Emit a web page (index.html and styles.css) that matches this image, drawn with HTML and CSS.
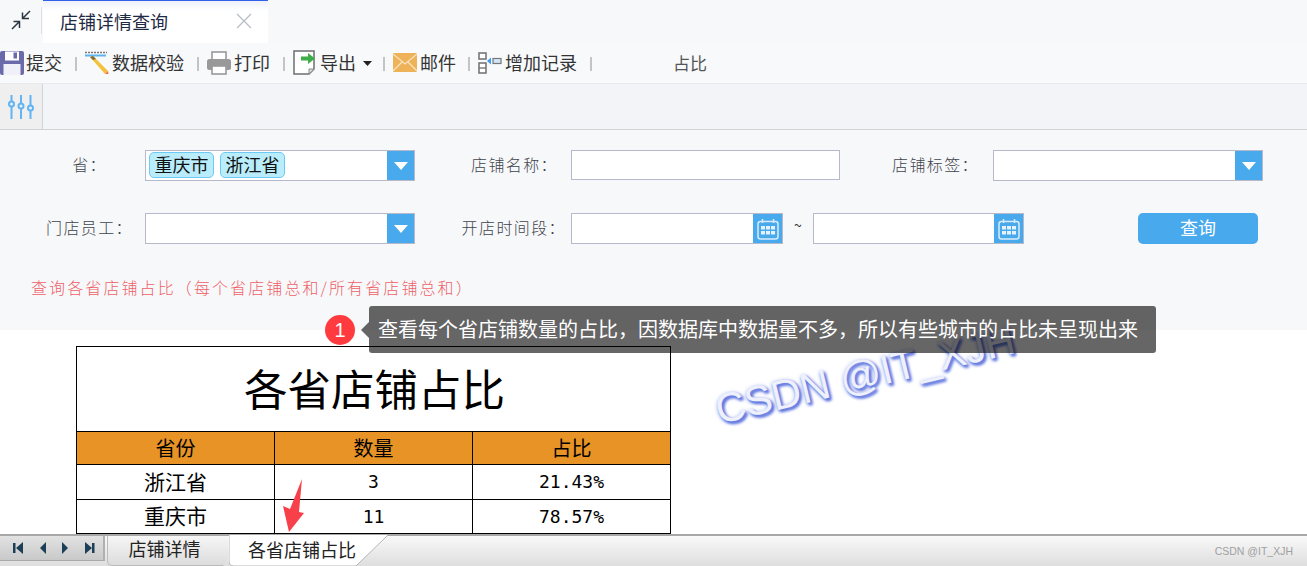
FILE: index.html
```html
<!DOCTYPE html>
<html lang="zh-CN">
<head>
<meta charset="utf-8">
<title>店铺详情查询</title>
<link rel="stylesheet" href="styles.css">
</head>
<body>
<div class="page">
  <header class="tabbar">
    <button class="collapse" aria-label="收起">
      <svg width="22" height="22" viewBox="0 0 22 22" fill="none" stroke="#2b3441" stroke-width="1.5"><path d="M20 2l-7.500 7.500M12.500 3.500v6h6.500"/><path d="M2 20l7.500-7.500M3.500 12.500h6v6.500"/></svg>
    </button>
    <div class="tab">
      <span>店铺详情查询</span>
      <svg class="tab-close" width="16" height="16" viewBox="0 0 16 16" stroke="#b6bcc6" stroke-width="1.2"><path d="M1 1l14 14M15 1L1 15"/></svg>
    </div>
  </header>

  <nav class="toolbar">
    <div class="tool tool-save">
      <svg width="24" height="24" viewBox="0 0 24 24"><rect y="0" width="24" height="24" rx="2" fill="#6b6bab"/><rect x="5" y="0.500" width="14" height="9" fill="#fff"/><rect x="13.500" y="1.500" width="3.500" height="6" fill="#6b6bab"/><rect x="3.500" y="13" width="17" height="11" fill="#f0f0f8"/></svg>
      <span>提交</span>
    </div>
    <i class="sep"></i>
    <div class="tool">
      <svg width="24" height="24" viewBox="0 0 24 24"><path d="M0 1.500h22" stroke="#777" stroke-width="1.500" stroke-dasharray="2 1"/><path d="M0 4.500h21" stroke="#5db4ee" stroke-width="2"/><path d="M5 6l3-1 15 15-3 3z" fill="#f3c23c"/><path d="M5 6l3-1 3 3-3 1z" fill="#7a6a3a"/><path d="M20 23l3-3 0.500 3z" fill="#ef6a50"/></svg>
      <span>数据校验</span>
    </div>
    <i class="sep"></i>
    <div class="tool">
      <svg width="24" height="24" viewBox="0 0 24 24"><rect x="5" y="1" width="14" height="9" fill="#fff" stroke="#999" stroke-width="1.600"/><rect y="8" width="24" height="11" rx="2.500" fill="#999"/><rect x="5" y="15" width="14" height="8" fill="#fff" stroke="#999" stroke-width="1.600"/></svg>
      <span>打印</span>
    </div>
    <i class="sep"></i>
    <div class="tool tool-export">
      <svg width="24" height="25" viewBox="0 0 24 25"><path d="M1 1h20v18l-5 5H1z" fill="#fff" stroke="#6d6d6d" stroke-width="1.500"/><path d="M21 19h-5v5z" fill="#ddd" stroke="#888"/><path d="M8 6.500h7V3l7 5.500-7 5.500v-3.500H8z" fill="#3fae49"/></svg>
      <span>导出</span>
      <svg class="caret" width="9" height="5" viewBox="0 0 9 5"><path d="M0 0h9L4.500 5z" fill="#222"/></svg>
    </div>
    <i class="sep"></i>
    <div class="tool tool-mail">
      <svg width="24" height="19" viewBox="0 0 24 19"><rect width="24" height="19" rx="1" fill="#eeb258"/><path d="M0 1l12 10L24 1M0 18l9-9M24 18l-9-9" fill="none" stroke="#fbe3bd" stroke-width="1.300"/></svg>
      <span>邮件</span>
    </div>
    <i class="sep"></i>
    <div class="tool">
      <svg width="24" height="22" viewBox="0 0 24 22"><rect x="1" y="1" width="7" height="6" fill="#fff" stroke="#777" stroke-width="1.600"/><rect x="1" y="11" width="7" height="10" fill="#fff" stroke="#777" stroke-width="1.600"/><path d="M1 16h7" stroke="#777" stroke-width="1.400"/><path d="M9 9l4-3.500v7z" fill="#3f9cf2"/><rect x="15" y="6.500" width="8" height="5" fill="#cfe6fb" stroke="#777" stroke-width="1.200"/></svg>
      <span>增加记录</span>
    </div>
    <i class="sep"></i>
    <div class="tool-plain">占比</div>
  </nav>

  <div class="filterstrip">
    <div class="filter-icon">
      <svg width="26" height="26" viewBox="0 0 26 26" stroke="#62b4f2" stroke-width="2" fill="none"><path d="M3.500 1v6M3.500 13v12M13 1v8M13 15v10M22.500 1v10M22.500 17v8"/><circle cx="3.500" cy="10" r="2.500"/><circle cx="13" cy="12" r="2.500"/><circle cx="22.500" cy="14" r="2.500"/></svg>
    </div>
  </div>

  <section class="form">
    <div class="form-grid">
      <label class="lbl lbl-a">省：</label>
      <div class="field">
        <div class="chips"><span class="chip">重庆市</span><span class="chip">浙江省</span></div>
        <span class="drop"><i></i></span>
      </div>
      <label class="lbl lbl-b">店铺名称：</label>
      <div class="field field-text"></div>
      <label class="lbl lbl-c">店铺标签：</label>
      <div class="field">
        <div class="chips"></div>
        <span class="drop"><i></i></span>
      </div>

      <label class="lbl lbl-d">门店员工：</label>
      <div class="field">
        <div class="chips"></div>
        <span class="drop"><i></i></span>
      </div>
      <label class="lbl lbl-e">开店时间段：</label>
      <div class="dates">
        <div class="field field-date">
          <div class="chips"></div>
          <span class="cal"><svg width="22" height="22" viewBox="0 0 22 22"><use href="#calendar"/></svg></span>
        </div>
        <span class="tilde">~</span>
        <div class="field field-date">
          <div class="chips"></div>
          <span class="cal"><svg width="22" height="22" viewBox="0 0 22 22"><use href="#calendar"/></svg></span>
        </div>
        <button class="query">查询</button>
      </div>
    </div>
    <p class="note">查询各省店铺占比（每个省店铺总和/所有省店铺总和）</p>
  </section>

  <main class="report">
    <table class="sheet">
      <colgroup><col class="c"><col class="c"><col class="c"></colgroup>
      <tr class="r-title"><td colspan="3">各省店铺占比</td></tr>
      <tr class="r-head"><th>省份</th><th>数量</th><th>占比</th></tr>
      <tr class="r-a"><td class="name">浙江省</td><td class="num">3</td><td class="num">21.43%</td></tr>
      <tr class="r-b"><td class="name">重庆市</td><td class="num">11</td><td class="num">78.57%</td></tr>
    </table>
    <div class="watermark">CSDN @IT_XJH</div>
    <svg class="red-arrow" width="22" height="54" viewBox="0 0 22 54"><path d="M19 0L16 33l5 1L6 53 0 27l7 3z" fill="#f8404a"/></svg>
  </main>

  <div class="tip">
    <span class="badge">1</span>
    <div class="tip-box">查看每个省店铺数量的占比，因数据库中数据量不多，所以有些城市的占比未呈现出来</div>
  </div>

  <footer class="sheetbar">
    <div class="pager">
      <svg width="82" height="12" viewBox="0 0 82 12" fill="#1c3f58"><path d="M0 1h2.500v10H0zM10 0v12L3 6z"/><path d="M33 0v12l-6-6z"/><path d="M49 0v12l6-6z"/><path d="M72 0v12l7-6zM79 1h2.500v10H79z"/></svg>
    </div>
    <div class="stab stab-off">店铺详情</div>
    <div class="stab stab-on">
      <svg class="stab-shape" width="160" height="32" viewBox="0 0 160 32"><path d="M0 0v26q0 5 5 5h122L159 0" fill="#fff" stroke="#b5b5b5"/></svg>
      <span>各省店铺占比</span>
    </div>
    <div class="credit">CSDN @IT_XJH</div>
  </footer>
</div>

<svg class="defs" width="0" height="0" aria-hidden="true">
  <symbol id="calendar" viewBox="0 0 22 22">
    <rect x="1" y="3.500" width="20" height="17.500" rx="2.500" fill="none" stroke="#d7ecfb" stroke-width="1.500"/>
    <path d="M5.500 1v4M16.500 1v4" stroke="#d7ecfb" stroke-width="1.500"/>
    <g fill="#e4f2fc"><rect x="4" y="8" width="4" height="3.500"/><rect x="9" y="8" width="4" height="3.500"/><rect x="14" y="8" width="4" height="3.500"/><rect x="4" y="13" width="4" height="3.500"/><rect x="9" y="13" width="4" height="3.500"/><rect x="14" y="13" width="4" height="3.500"/></g>
  </symbol>
</svg>
</body>
</html>
```
FILE: styles.css
```css
* { box-sizing: border-box; }
html, body { margin: 0; height: 100%; overflow: hidden; }
body { font-family: "Noto Sans CJK SC", "Liberation Sans", sans-serif; color: #333; background: #fff; }
.page { position: relative; width: 1307px; height: 566px; display: flex; flex-direction: column; overflow: hidden; }

.tabbar { height: 43px; flex: none; display: flex; background: #f7f8fa; }
.collapse { width: 42px; height: 43px; padding: 0 0 3px; border: 0; background: none; display: flex; align-items: center; justify-content: center; position: relative; }
.collapse::after { content: ""; position: absolute; right: 0; top: 7px; height: 27px; border-right: 1px solid #dfe1e6; }
.tab { width: 225px; margin-left: 1px; background: linear-gradient(#eef1fb 0, #fff 10px); border-top: 1px solid #2f62e6; display: flex; align-items: center; justify-content: space-between; padding: 0 16px 3px 17px; font-size: 18px; color: #1f2a44; }
.tab-close { flex: none; }

.toolbar { height: 41px; flex: none; background: #f8f9fb; border-bottom: 1px solid #e9eaee; display: flex; align-items: center; font-size: 18px; color: #333; padding-bottom: 1px; }
.tool { display: flex; align-items: center; gap: 3px; }
.tool span { padding-bottom: 1px; }
.tool svg { flex: none; }
.tool-save svg { margin-right: -1px; }
.tool-mail { margin-right: -1px; }
.tool-export { margin-right: -2px; }
.caret { margin-left: 4px; margin-top: 1px; }
.sep { width: 2px; height: 14px; background: #c4c4c4; margin: 2px 8px 0 13px; flex: none; }
.tool-plain { margin-left: 73px; font-size: 17px; color: #555; padding-bottom: 1px; }

.filterstrip { height: 46px; flex: none; background: #f3f4f8; border-bottom: 1px solid #d2d3d7; }
.filter-icon { width: 43px; height: 45px; background: #efefef; border-right: 1px solid #d2d3d7; display: flex; align-items: center; justify-content: center; }

.form { height: 200px; flex: none; background: #f7f8fa; padding-top: 20px; }
.form-grid { display: grid; grid-template-columns: 145px 270px 156px 269px 153px 270px; grid-template-rows: 31px 31px; row-gap: 32px; align-items: center; }
.lbl { font-size: 16px; letter-spacing: 1.400px; text-align: right; color: #3f444c; white-space: nowrap; font-weight: 300; padding-bottom: 3px; }
.lbl-a { padding-right: 38px; }
.lbl-b { padding-right: 13px; }
.lbl-c { padding-right: 14px; }
.lbl-d { padding-right: 12px; }
.lbl-e { padding-right: 5px; }
.field { height: 31px; display: flex; background: #fff; border: 1px solid #b6b8cb; }
.field-text { height: 30px; align-self: start; }
.chips { flex: 1; display: flex; gap: 6px; padding: 1px 0 0 3px; min-width: 0; }
.chip { height: 26px; padding: 0 4.500px; border: 1px solid #6ec8f4; border-radius: 5px; background: #b9edfb; font-size: 18px; line-height: 22px; color: #111; }
.drop { width: 27px; flex: none; background: #48a9ec; display: flex; align-items: center; justify-content: center; }
.drop i { width: 0; height: 0; border: 7px solid transparent; border-top: 8px solid #fff; border-bottom: 0; }
.dates { grid-column: 4 / 7; display: flex; align-items: center; }
.field-date { width: 212px; }
.field-date + .tilde + .field-date { width: 211px; }
.tilde { width: 30px; text-align: center; font-size: 14px; color: #333; margin-bottom: 8px; }
.cal { width: 29px; flex: none; background: #48a9ec; display: flex; align-items: center; justify-content: center; }
.query { width: 120px; height: 31px; margin: 0 5px 0 auto; padding: 0 0 3px; border: 0; border-radius: 5px; background: #48a9ec; color: #fff; font: 18px "Noto Sans CJK SC", sans-serif; }
.note { margin: 31px 0 0 31px; font-size: 16px; letter-spacing: 2.100px; color: #ee5f68; font-weight: 300; line-height: 24px; }

.report { position: relative; height: 204px; flex: none; padding: 16px 0 0 76px; background: #fff; }
.sheet { width: 595px; table-layout: fixed; border-collapse: collapse; color: #000; position: relative; }
.sheet td, .sheet th { border: 1px solid #000; padding: 0; text-align: center; font-weight: 400; }
.r-title { height: 85px; }
.r-title td { font-size: 43.500px; line-height: 50px; padding: 0 0 2px 2px; }
.r-head { height: 33px; }
.r-head th { background: #e79326; font-size: 20px; line-height: 26px; }
.r-a { height: 35px; }
.r-b { height: 34px; }
.sheet .name { font-size: 21px; line-height: 26px; padding-bottom: 3px; }
.num { font-family: "DejaVu Sans Mono", monospace; font-size: 18px; line-height: 20px; }
.watermark { position: absolute; left: 716px; top: 53px; font: 41px/50px "Liberation Sans", sans-serif; white-space: nowrap; color: #eef1fc; text-shadow: 2px 3px 3px #5f76de, 1px 2px 3px #7287e6, 0 1px 4px #9aa9ee; transform: rotate(-13.500deg); transform-origin: 10px 50%; }
.red-arrow { position: absolute; left: 283px; top: 149px; }

.tip { position: absolute; left: 325px; top: 306px; display: flex; align-items: center; }
.badge { width: 30px; height: 30px; flex: none; border-radius: 50%; background: #ff3b3f; color: #fff; font: 20px/30px "Liberation Sans", sans-serif; text-align: center; }
.tip-box { position: relative; margin-left: 14px; width: 787px; height: 47px; padding-left: 9px; border-radius: 3px; background: rgba(0, 0, 0, .6); color: #fff; font-size: 20px; line-height: 45px; white-space: nowrap; }
.tip-box::before { content: ""; position: absolute; left: -8px; top: 16px; border: 8px solid transparent; border-left: 0; border-right-color: rgba(0, 0, 0, .6); }

.sheetbar { position: relative; height: 32px; flex: none; display: flex; border-top: 2px solid #a8a8a8; background: linear-gradient(#f9f9f9, #dedede); font-size: 18px; color: #222; }
.pager { width: 105px; height: 25px; background: linear-gradient(#e2e2e2, #c9c9c9); border-right: 2px solid #b0b0b0; border-bottom: 1px solid #aaa; display: flex; align-items: center; padding-left: 13px; }
.stab { height: 30px; display: flex; align-items: center; justify-content: center; line-height: 26px; }
.stab-off { width: 121px; margin-left: 2px; background: linear-gradient(#f6f6f6, #dcdcdc); border-left: 1px solid #bbb; border-bottom: 1px solid #bbb; border-radius: 0 0 0 5px; padding: 0 7px 5px 0; clip-path: polygon(0 0, 100% 0, 100% 70%, 96% 100%, 0 100%); }
.stab-on { position: relative; width: 160px; margin-left: 1px; justify-content: flex-start; padding: 0 0 5px 19px; }
.stab-shape { position: absolute; left: 0; top: -1px; }
.stab-on span { position: relative; }
.credit { margin-left: auto; padding: 9px 14px 0 0; font: 10.500px/13px "Liberation Sans", sans-serif; color: #a0a0a0; }

.defs { position: absolute; }
```
